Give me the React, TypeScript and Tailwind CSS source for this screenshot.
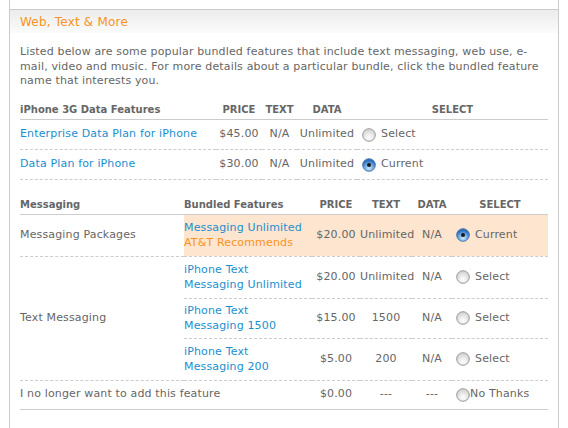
import React from 'react';

const FONT = { fontFamily: '"DejaVu Sans", Verdana, sans-serif' };

function Radio({ checked }: { checked?: boolean }) {
  return (
    <svg width="14" height="14" viewBox="0 0 14 14" className="shrink-0">
      <defs>
        <radialGradient id="rOff" cx="50%" cy="70%" r="60%">
          <stop offset="0%" stopColor="#ffffff" />
          <stop offset="100%" stopColor="#d6d6d6" />
        </radialGradient>
        <radialGradient id="rOn" cx="50%" cy="75%" r="60%">
          <stop offset="0%" stopColor="#cfe6fb" />
          <stop offset="60%" stopColor="#6aa6e0" />
          <stop offset="100%" stopColor="#2d6fbd" />
        </radialGradient>
      </defs>
      <circle cx="7" cy="7" r="6.3" fill={checked ? 'url(#rOn)' : 'url(#rOff)'} stroke={checked ? '#3d6ea8' : '#8e8e8e'} strokeWidth="0.9" />
      {checked && <circle cx="7" cy="7" r="2" fill="#1a1a1a" />}
    </svg>
  );
}

function Choice({ checked, label, tight }: { checked?: boolean; label: string; tight?: boolean }) {
  return (
    <span className={`flex items-center ${tight ? 'gap-0' : 'gap-[5px]'}`}>
      <Radio checked={checked} />
      <span>{label}</span>
    </span>
  );
}

const dataPlans = [
  { name: 'Enterprise Data Plan for iPhone', price: '$45.00', text: 'N/A', data: 'Unlimited', checked: false },
  { name: 'Data Plan for iPhone', price: '$30.00', text: 'N/A', data: 'Unlimited', checked: true },
];

const textPlans = [
  { name: ['iPhone Text', 'Messaging Unlimited'], price: '$20.00', text: 'Unlimited', h: 'h-[42px]' },
  { name: ['iPhone Text', 'Messaging 1500'], price: '$15.00', text: '1500', h: 'h-[40px]' },
  { name: ['iPhone Text', 'Messaging 200'], price: '$5.00', text: '200', h: 'h-[42px]' },
];

export default function App() {
  return (
    <div className="w-[568px] h-[428px] bg-white overflow-hidden text-[11px] tracking-[0.15px] text-[#666]" style={FONT}>
      <div className="ml-[9px] w-[550px] h-full border-x border-[#cccccc]">
        <div className="h-[9px]" />
        <div className="border-t border-[#cccccc] h-[24px] bg-gradient-to-b from-[#ececec] to-[#fbfbfb] pl-[10px] flex items-center">
          <span className="text-[12px] tracking-[0.2px] text-[#f7931e] leading-none">Web, Text &amp; More</span>
        </div>
        <div className="px-[10px]">
          <p className="mt-[12px] leading-[14.5px]">
            Listed below are some popular bundled features that include text messaging, web use, e-mail, video and music. For more details about a particular bundle, click the bundled feature name that interests you.
          </p>

          <table className="mt-[12px] w-[528px] border-collapse table-fixed">
            <colgroup>
              <col className="w-[196px]" />
              <col className="w-[46px]" />
              <col className="w-[35px]" />
              <col className="w-[60px]" />
              <col />
            </colgroup>
            <thead>
              <tr className="h-[19px] border-b border-[#cccccc] text-[10px] font-bold tracking-normal">
                <th className="text-left font-bold">iPhone 3G Data Features</th>
                <th className="text-center">PRICE</th>
                <th className="text-center">TEXT</th>
                <th className="text-center">DATA</th>
                <th className="text-center">SELECT</th>
              </tr>
            </thead>
            <tbody>
              {dataPlans.map((p) => (
                <tr key={p.name} className="h-[30px] border-b border-dashed border-[#cccccc]">
                  <td className="text-[#1a8fd0] whitespace-nowrap">{p.name}</td>
                  <td className="text-center">{p.price}</td>
                  <td className="text-center">{p.text}</td>
                  <td className="text-center">{p.data}</td>
                  <td className="pl-[5px]">
                    <Choice checked={p.checked} label={p.checked ? 'Current' : 'Select'} />
                  </td>
                </tr>
              ))}
            </tbody>
          </table>

          <table className="mt-[16px] w-[528px] border-collapse table-fixed">
            <colgroup>
              <col className="w-[164px]" />
              <col className="w-[128px]" />
              <col className="w-[48px]" />
              <col className="w-[52px]" />
              <col className="w-[40px]" />
              <col />
            </colgroup>
            <thead>
              <tr className="h-[18px] border-b border-[#cccccc] text-[10px] font-bold tracking-normal">
                <th className="text-left">Messaging</th>
                <th className="text-left">Bundled Features</th>
                <th className="text-center">PRICE</th>
                <th className="text-center">TEXT</th>
                <th className="text-center">DATA</th>
                <th className="text-center">SELECT</th>
              </tr>
            </thead>
            <tbody>
              <tr className="h-[41px] border-b border-dashed border-[#cccccc]">
                <td>Messaging Packages</td>
                <td colSpan={5} className="p-0">
                  <div className="h-[41px] bg-[#fde5cf] flex items-center">
                    <div className="w-[128px] leading-[15px]">
                      <div className="text-[#1a8fd0]">Messaging Unlimited</div>
                      <div className="text-[#f7931e]">AT&amp;T Recommends</div>
                    </div>
                    <div className="w-[48px] text-center">$20.00</div>
                    <div className="w-[52px] text-center">Unlimited</div>
                    <div className="w-[40px] text-center">N/A</div>
                    <div className="pl-[4px]">
                      <Choice checked label="Current" />
                    </div>
                  </div>
                </td>
              </tr>
              {textPlans.map((p, i) => (
                <tr key={p.text} className={`${p.h} border-b border-dashed border-[#cccccc]`}>
                  {i === 0 && <td rowSpan={3}>Text Messaging</td>}
                  <td className="text-[#1a8fd0] leading-[15px]">
                    <div>{p.name[0]}</div>
                    <div>{p.name[1]}</div>
                  </td>
                  <td className="text-center">{p.price}</td>
                  <td className="text-center">{p.text}</td>
                  <td className="text-center">N/A</td>
                  <td className="pl-[4px]">
                    <Choice label="Select" />
                  </td>
                </tr>
              ))}
              <tr className="h-[29px] border-b border-[#cccccc]">
                <td colSpan={2}>I no longer want to add this feature</td>
                <td className="text-center">$0.00</td>
                <td className="text-center">---</td>
                <td className="text-center">---</td>
                <td className="pl-[4px]">
                  <Choice tight label="No Thanks" />
                </td>
              </tr>
            </tbody>
          </table>
        </div>
      </div>
    </div>
  );
}
